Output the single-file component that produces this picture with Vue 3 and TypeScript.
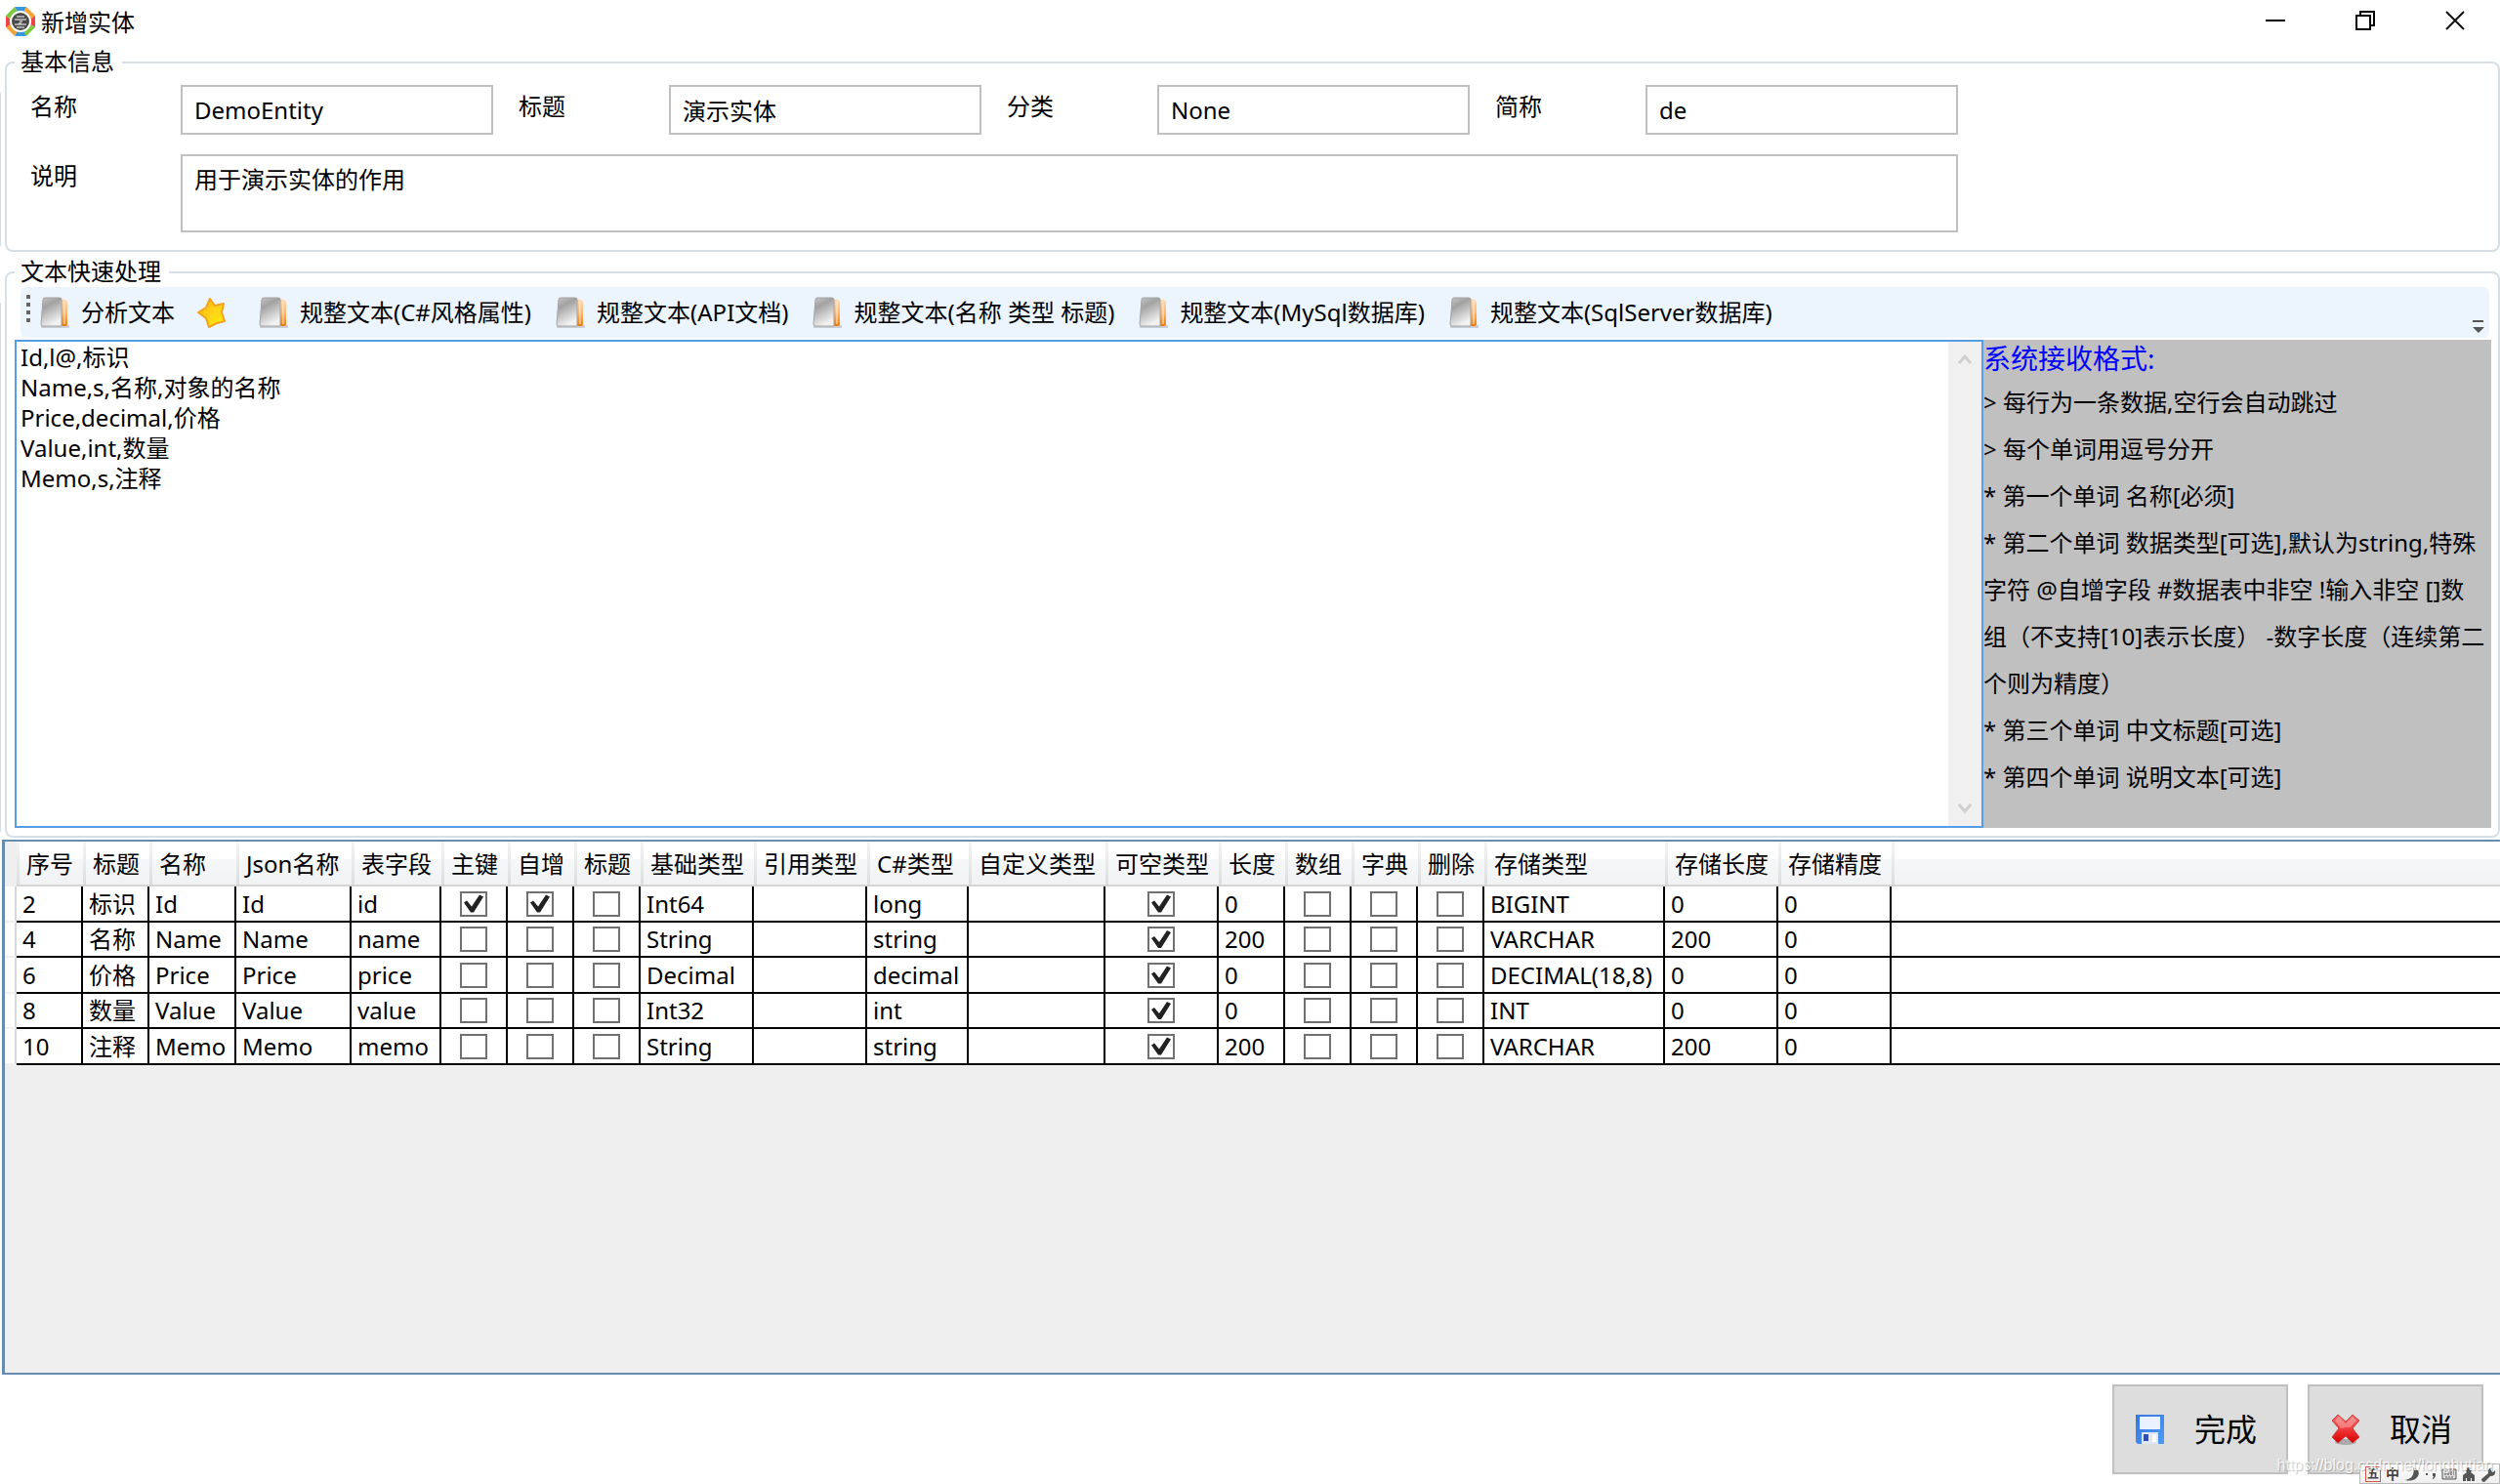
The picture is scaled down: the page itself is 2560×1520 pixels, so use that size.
<script setup lang="ts">
import { ref } from 'vue'

interface Column {
  key: string
  title: string
  width: number
  check?: boolean
}

interface Row {
  cells: Record<string, string>
  checked: string[]
}

const fields = ref([
  { id: 'name', label: '名称', value: 'DemoEntity' },
  { id: 'title', label: '标题', value: '演示实体' },
  { id: 'category', label: '分类', value: 'None' },
  { id: 'short', label: '简称', value: 'de' },
])
const memo = ref('用于演示实体的作用')

const source = ref(
  ['Id,l@,标识', 'Name,s,名称,对象的名称', 'Price,decimal,价格', 'Value,int,数量', 'Memo,s,注释'].join('\n'),
)

const formatters = [
  '规整文本(C#风格属性)',
  '规整文本(API文档)',
  '规整文本(名称 类型 标题)',
  '规整文本(MySql数据库)',
  '规整文本(SqlServer数据库)',
]

const help = [
  '> 每行为一条数据,空行会自动跳过',
  '> 每个单词用逗号分开',
  '* 第一个单词 名称[必须]',
  '* 第二个单词 数据类型[可选],默认为string,特殊',
  '字符 @自增字段 #数据表中非空 !输入非空 []数',
  '组（不支持[10]表示长度） -数字长度（连续第二',
  '个则为精度）',
  '* 第三个单词 中文标题[可选]',
  '* 第四个单词 说明文本[可选]',
].join('\n')

const columns: Column[] = [
  { key: 'no', title: '序号', width: 68 },
  { key: 'caption', title: '标题', width: 68 },
  { key: 'name', title: '名称', width: 89 },
  { key: 'json', title: 'Json名称', width: 118 },
  { key: 'field', title: '表字段', width: 92 },
  { key: 'pk', title: '主键', width: 68, check: true },
  { key: 'auto', title: '自增', width: 68, check: true },
  { key: 'isTitle', title: '标题', width: 68, check: true },
  { key: 'base', title: '基础类型', width: 116 },
  { key: 'refType', title: '引用类型', width: 116 },
  { key: 'cs', title: 'C#类型', width: 104 },
  { key: 'custom', title: '自定义类型', width: 140 },
  { key: 'nullable', title: '可空类型', width: 116, check: true },
  { key: 'len', title: '长度', width: 68 },
  { key: 'array', title: '数组', width: 68, check: true },
  { key: 'dict', title: '字典', width: 68, check: true },
  { key: 'del', title: '删除', width: 68, check: true },
  { key: 'store', title: '存储类型', width: 185 },
  { key: 'storeLen', title: '存储长度', width: 116 },
  { key: 'scale', title: '存储精度', width: 116 },
]

function row(
  no: string, caption: string, name: string, base: string, cs: string,
  len: string, store: string, storeLen: string, checked: string[],
): Row {
  return {
    cells: { no, caption, name, json: name, field: name.toLowerCase(), base, cs, len, store, storeLen, scale: '0' },
    checked,
  }
}

const rows: Row[] = [
  row('2', '标识', 'Id', 'Int64', 'long', '0', 'BIGINT', '0', ['pk', 'auto', 'nullable']),
  row('4', '名称', 'Name', 'String', 'string', '200', 'VARCHAR', '200', ['nullable']),
  row('6', '价格', 'Price', 'Decimal', 'decimal', '0', 'DECIMAL(18,8)', '0', ['nullable']),
  row('8', '数量', 'Value', 'Int32', 'int', '0', 'INT', '0', ['nullable']),
  row('10', '注释', 'Memo', 'String', 'string', '200', 'VARCHAR', '200', ['nullable']),
]
</script>

<template>
  <div class="window">
    <svg class="defs" width="0" height="0" aria-hidden="true">
      <defs>
        <linearGradient id="cover" x1="0" y1="0" x2="0.4" y2="1">
          <stop offset="0" stop-color="#c8c8c8" />
          <stop offset="0.35" stop-color="#a2a2a2" />
          <stop offset="1" stop-color="#f2f2f2" />
        </linearGradient>
        <linearGradient id="pages" x1="0" y1="0" x2="0" y2="1">
          <stop offset="0" stop-color="#ffd9b3" />
          <stop offset="0.5" stop-color="#ffb870" />
          <stop offset="1" stop-color="#f07800" />
        </linearGradient>
        <linearGradient id="gold" x1="0" y1="0" x2="1" y2="1">
          <stop offset="0" stop-color="#ffb400" />
          <stop offset="0.5" stop-color="#ffd21a" />
          <stop offset="1" stop-color="#fff200" />
        </linearGradient>
        <linearGradient id="disk" x1="0" y1="0" x2="1" y2="1">
          <stop offset="0" stop-color="#3a74e0" />
          <stop offset="1" stop-color="#4a9cf5" />
        </linearGradient>
        <linearGradient id="crimson" x1="0" y1="0" x2="0" y2="1">
          <stop offset="0" stop-color="#ee6a6a" />
          <stop offset="0.5" stop-color="#f23a3a" />
          <stop offset="1" stop-color="#d40000" />
        </linearGradient>
        <symbol id="book" viewBox="0 0 32 34">
          <path d="M1 30h29v3H1z" fill="#8a8a8a" opacity="0.35" />
          <path d="M19 3l7 1q2 1 2 3v22q0 2-2 2h-7z" fill="url(#pages)" />
          <path d="M25 5v24" stroke="#fff0dc" />
          <path d="M5 2h15q2 0 2 2v27H3q-2 0-2-2L3 4q0-2 2-2z" fill="url(#cover)" stroke="#a4a4a4" />
        </symbol>
      </defs>
    </svg>

    <header class="titlebar">
      <svg class="logo" width="30" height="30" viewBox="0 0 30 30">
        <path d="M9 0h12l-3 6h-6z" fill="#3b97dd" />
        <path d="M21 0l9 9-5 4-7-7z" fill="#f7a233" />
        <path d="M30 9v12l-5-3v-5z" fill="#ef4444" />
        <path d="M30 21l-9 9-3-6 7-6z" fill="#7cc93f" />
        <path d="M21 30H9l3-6h6z" fill="#3b97dd" />
        <path d="M9 30l-9-9 5-3 7 6z" fill="#f7a233" />
        <path d="M0 21V9l5 4v5z" fill="#ef4444" />
        <path d="M0 9l9-9 3 6-7 7z" fill="#7cc93f" />
        <circle cx="15" cy="15" r="11" fill="#fff" />
        <circle cx="15" cy="15" r="9" fill="#4a4a4a" />
        <path d="M11 10h8M9 13h12M9 18h12M11 21h8M14 15h3M13 17h3" stroke="#fff" fill="none" />
      </svg>
      <h1>新增实体</h1>
      <div class="caption-buttons">
        <button type="button" aria-label="最小化">
          <svg width="20" height="20"><path d="M0 10h20" stroke="#000" stroke-width="2" /></svg>
        </button>
        <button type="button" aria-label="还原">
          <svg width="20" height="20" fill="none" stroke="#000" stroke-width="2">
            <path d="M1 5h14v14H1zM5 5V1h14v14h-4" />
          </svg>
        </button>
        <button type="button" aria-label="关闭">
          <svg width="20" height="20"><path d="M1 1l18 18M19 1L1 19" stroke="#111" stroke-width="2" /></svg>
        </button>
      </div>
    </header>

    <fieldset class="group">
      <legend>基本信息</legend>
      <div class="form">
        <div class="form-row">
          <div v-for="f in fields" :key="f.id" class="field">
            <label :for="f.id">{{ f.label }}</label>
            <input :id="f.id" v-model="f.value" type="text" />
          </div>
        </div>
        <div class="field memo">
          <label for="memo">说明</label>
          <textarea id="memo" v-model="memo"></textarea>
        </div>
      </div>
    </fieldset>

    <fieldset class="group quick">
      <legend>文本快速处理</legend>
      <div class="toolbar">
        <span class="grip"><i></i><i></i><i></i><i></i></span>
        <button type="button" class="tool">
          <svg width="32" height="34"><use href="#book" /></svg>
          <span>分析文本</span>
        </button>
        <button type="button" class="tool star" aria-label="收藏">
          <svg width="32" height="34" viewBox="0 0 32 34">
            <path d="M14 3l5 7 9-2-2 9 3 9-8 2-8 4-3-9-8-6 8-5z" fill="url(#gold)" stroke="#f3a21c" stroke-width="2" stroke-linejoin="round" />
          </svg>
        </button>
        <button v-for="f in formatters" :key="f" type="button" class="tool formatter">
          <svg width="32" height="34"><use href="#book" /></svg>
          <span>{{ f }}</span>
        </button>
        <button type="button" class="overflow" aria-label="更多">
          <svg width="12" height="14"><path d="M0 0h11v2H0zM0 7h12l-6 6z" fill="#555" /></svg>
        </button>
      </div>
      <div class="editor">
        <div class="source">
          <textarea v-model="source" aria-label="文本" spellcheck="false"></textarea>
          <div class="scrollbar">
            <svg width="14" height="12"><path d="M1 10l6-7 6 7" fill="none" stroke="#d0d0d0" stroke-width="3" /></svg>
            <svg width="14" height="12"><path d="M1 2l6 7 6-7" fill="none" stroke="#d0d0d0" stroke-width="3" /></svg>
          </div>
        </div>
        <aside class="help">
          <h2>系统接收格式:</h2>
          <p>{{ help }}</p>
        </aside>
      </div>
    </fieldset>

    <main class="grid">
      <table>
        <colgroup>
          <col class="row-head" />
          <col v-for="c in columns" :key="c.key" :style="{ width: c.width + 'px' }" />
          <col />
        </colgroup>
        <thead>
          <tr>
            <td class="corner"></td>
            <th v-for="c in columns" :key="c.key" scope="col">{{ c.title }}</th>
            <td class="rest"></td>
          </tr>
        </thead>
        <tbody>
          <tr v-for="r in rows" :key="r.cells.no">
            <td class="row-head"></td>
            <td v-for="c in columns" :key="c.key" :class="{ check: c.check }">
              <input v-if="c.check" type="checkbox" :checked="r.checked.includes(c.key)" :aria-label="r.cells.name + ' ' + c.title" />
              <template v-else>{{ r.cells[c.key] }}</template>
            </td>
            <td class="rest"></td>
          </tr>
        </tbody>
      </table>
    </main>

    <footer class="actions">
      <button type="button">
        <svg width="30" height="30" viewBox="0 0 30 30">
          <path d="M0 0h29v30H2l-2-2z" fill="url(#disk)" />
          <path d="M4 2h21v13H4z" fill="#eaf2ff" />
          <path d="M6 18h17v12H6z" fill="#dfe6f2" />
          <path d="M8 20h5v7H8z" fill="#2b4fc0" />
          <path d="M17 20h4v8h-4z" fill="#fff" />
        </svg>
        <span>完成</span>
      </button>
      <button type="button">
        <svg width="30" height="32" viewBox="0 0 30 32">
          <ellipse cx="15" cy="29" rx="11" ry="3" fill="#777" opacity="0.5" />
          <path d="M7 1l8 7 7-7 7 6-7 8 7 9-7 6-7-7-8 7-6-6 7-9-7-8z" fill="url(#crimson)" stroke="#c84848" />
          <path d="M8 3l7 7 7-7 4 4-6 7q-6 0-10 1L4 7z" fill="#fff" opacity="0.3" />
        </svg>
        <span>取消</span>
      </button>
    </footer>

    <div class="ime">
      <b class="wubi">五</b>
      <b>中</b>
      <svg width="16" height="16"><path d="M9 1q8 3 5 9-4 6-13 4 11-2 8-13z" fill="#555" /></svg>
      <svg width="12" height="16"><path d="M1 7h2v2H1zM8 7h3v3l-2 3H8l1-3H8z" fill="#555" /></svg>
      <svg width="16" height="16">
        <path d="M1 3h14v10H1z" fill="#ddd" stroke="#555" />
        <path d="M3 6h10M3 8h10M4 11h8" stroke="#555" stroke-dasharray="2 1" />
      </svg>
      <svg width="14" height="16"><path d="M7 1a3 3 0 0 1 2 5l4 3v6h-3v-3H9v3H5v-3H4v3H1V9l4-3a3 3 0 0 1 2-5z" fill="#555" /></svg>
      <svg width="16" height="16"><path d="M1 13l7-6q-1-5 4-6l-1 4 2 1 2-2q1 6-5 6l-6 6q-3 0-3-3z" fill="#555" /></svg>
    </div>
    <span class="watermark">https://blog.csdn.net/longhutian</span>
  </div>
</template>

<style>
body {
  margin: 0;
  background: #fff;
}
</style>

<style scoped>
.window {
  position: relative;
  display: flex;
  flex-direction: column;
  min-height: 100vh;
  overflow: hidden;
  color: #000;
  font: 24px/30px 'Noto Sans', 'Noto Sans CJK SC', sans-serif;
  text-spacing-trim: space-all;
}

.window * {
  box-sizing: border-box;
}

.defs {
  position: absolute;
}

button,
input,
textarea {
  margin: 0;
  font: inherit;
  color: inherit;
}

.titlebar {
  display: flex;
  align-items: flex-start;
  height: 49px;
  padding-left: 6px;
}

.logo {
  margin-top: 7px;
}

h1 {
  margin: 8px 0 0 6px;
  font-size: 24px;
  font-weight: 400;
  line-height: 30px;
}

.caption-buttons {
  display: flex;
  margin-left: auto;
}

.caption-buttons button {
  display: grid;
  place-items: center;
  width: 92px;
  height: 42px;
  padding: 0;
  border: 0;
  background: none;
}

.group {
  position: relative;
  min-width: 0;
  margin: 0 0 0 5px;
  padding: 0 7px 0 8px;
  border: 2px solid #d5dfe5;
  border-radius: 8px;
}

.group::before {
  content: '';
  position: absolute;
  top: 16px;
  bottom: 4px;
  left: -7px;
  width: 1px;
  background: #d5dfe5;
}

.group legend {
  padding: 0 8px 2px 6px;
  line-height: 28px;
}

.form {
  display: flex;
  flex-direction: column;
  gap: 20px;
  padding: 8px 0 18px 16px;
}

.form-row {
  display: flex;
  gap: 26px;
}

.field {
  display: flex;
}

.field label {
  width: 154px;
  line-height: 44px;
}

.field input {
  width: 320px;
  height: 51px;
  padding: 0 12px;
  border: 2px solid #c0c0c0;
  outline: 0;
}

.field textarea {
  width: 1820px;
  height: 80px;
  padding: 8px 12px;
  border: 2px solid #c0c0c0;
  outline: 0;
  line-height: 32px;
  resize: none;
}

.quick {
  margin-top: 6px;
  padding-bottom: 8px;
}

.toolbar {
  display: flex;
  align-items: center;
  height: 52px;
  margin: 0 2px 2px 6px;
  padding-left: 6px;
  border-radius: 6px;
  background: #ecf4fd;
}

.grip {
  display: flex;
  flex-direction: column;
  gap: 4px;
  margin-right: 10px;
  padding-bottom: 8px;
}

.grip i {
  width: 4px;
  height: 4px;
  background: #666;
}

.tool {
  display: flex;
  align-items: center;
  gap: 10px;
  margin-right: 22px;
  padding: 0;
  border: 0;
  background: none;
  line-height: 34px;
  white-space: nowrap;
}

.tool.star {
  margin-right: 32px;
}

.tool.formatter {
  margin-right: 25px;
}

.overflow {
  align-self: flex-end;
  margin: 0 5px 4px auto;
  padding: 0;
  border: 0;
  background: none;
  line-height: 0;
}

.editor {
  display: flex;
  height: 500px;
}

.source {
  display: flex;
  flex: 1;
  border: 2px solid #569de5;
}

.source textarea {
  flex: 1;
  padding: 0 4px;
  border: 0;
  outline: 0;
  line-height: 31px;
  resize: none;
}

.scrollbar {
  display: flex;
  flex-direction: column;
  justify-content: space-between;
  align-items: center;
  width: 34px;
  padding: 12px 0;
  background: #f0f0f0;
}

.help {
  width: 520px;
  background: #c0c0c0;
}

.help h2 {
  margin: 0 0 2px;
  color: #00f;
  font-size: 28px;
  font-weight: 400;
  line-height: 38px;
}

.help p {
  margin: 0;
  line-height: 48px;
  white-space: pre;
}

.grid {
  flex: 1;
  margin: 2px 0 0 2px;
  border: 2px solid #688caf;
  border-left-width: 3px;
  border-right: 0;
  background: #efefef;
}

table {
  width: 100%;
  table-layout: fixed;
  border-collapse: separate;
  border-spacing: 0;
}

col.row-head {
  width: 12px;
}

td,
th {
  padding: 0;
  text-align: left;
  font-weight: 400;
  white-space: nowrap;
}

thead th,
thead .rest {
  height: 46px;
  padding: 2px 0 0 10px;
  border-bottom: 2px solid #d5d5d5;
  background:
    linear-gradient(#f4f4f4, #dcddde) 0 0 / 3px 100% no-repeat,
    linear-gradient(#fff 40%, #f6f7f8 41%, #f1f2f4);
}

tbody tr {
  height: 37px;
}

tbody tr:nth-child(even) {
  height: 36px;
}

tbody td {
  padding-left: 6px;
  border-right: 2px solid #000;
  border-bottom: 2px solid #000;
  background: #fff;
}

tbody td.row-head {
  padding: 0;
  border-right: 2px solid #d8d8d8;
  border-bottom: 2px solid #efefef;
}

tbody td.rest {
  border-right: 0;
}

tbody td.check {
  padding: 0;
  text-align: center;
}

.check input {
  appearance: none;
  position: relative;
  display: block;
  width: 28px;
  height: 26px;
  margin: 0 auto;
  border: 2px solid #707070;
  background: #fff;
}

.check input:checked::before {
  content: '';
  position: absolute;
  inset: 0;
  background: #212121;
  clip-path: polygon(2px 10px, 5px 8px, 10px 14px, 18px 2px, 22px 4px, 12px 20px, 9px 20px);
}

.actions {
  display: flex;
  justify-content: flex-end;
  gap: 20px;
  padding: 10px 17px;
}

.actions button {
  display: flex;
  align-items: center;
  gap: 30px;
  width: 180px;
  height: 92px;
  padding: 0 0 0 22px;
  border: 2px solid #c0c0c0;
  background: #ddd;
  font-size: 32px;
  line-height: 40px;
}

.ime {
  position: absolute;
  right: 0;
  bottom: 0;
  display: flex;
  align-items: center;
  justify-content: space-between;
  width: 144px;
  height: 21px;
  padding: 0 3px 0 5px;
  border: 1px solid #b8b8b8;
  background: linear-gradient(#fff, #eee);
  color: #444;
  font-size: 14px;
  line-height: 16px;
}

.ime .wubi {
  width: 16px;
  height: 16px;
  border: 1px solid #d4574a;
  font-size: 12px;
  line-height: 14px;
  text-align: center;
}

.watermark {
  position: absolute;
  right: 7px;
  bottom: 10px;
  color: rgba(255, 255, 255, 0.85);
  font: 16px/18px 'Liberation Sans', sans-serif;
  text-shadow: 1px 1px 1px rgba(0, 0, 0, 0.25);
}
</style>
